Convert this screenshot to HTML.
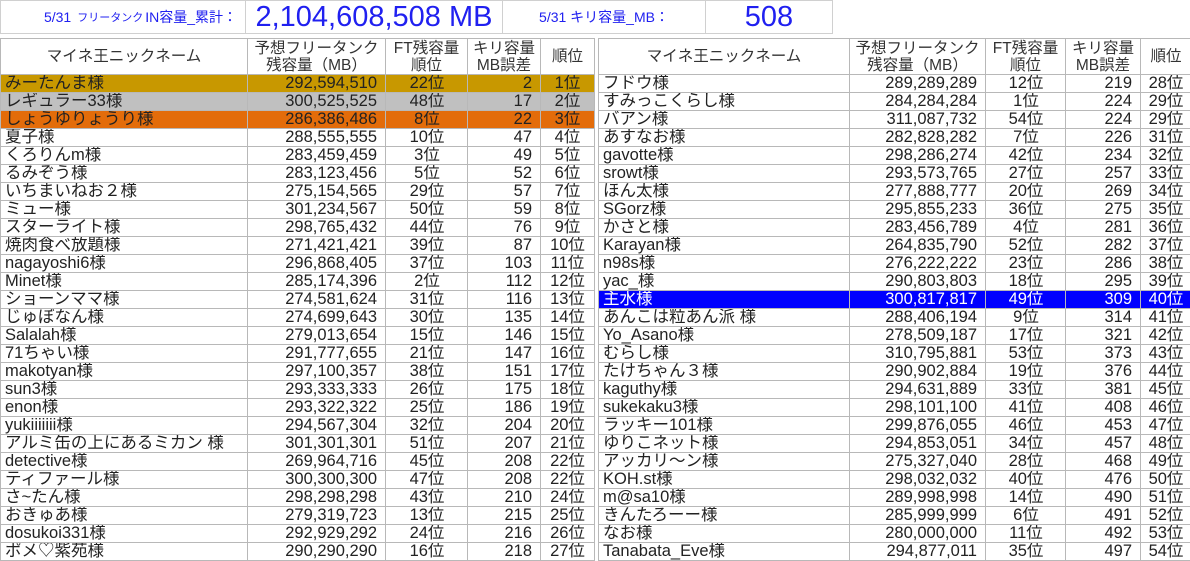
<!DOCTYPE html>
<html><head><meta charset="utf-8"><style>
body{margin:0;width:1190px;height:561px;background:#fff;position:relative;overflow:hidden;font-family:"Liberation Sans","Noto Sans CJK JP",sans-serif;color:#222}
.box{position:absolute;top:0;height:34px;border:1px solid #d0d0d0;box-sizing:border-box;color:#2020f0;display:flex;align-items:center;white-space:nowrap}
table{position:absolute;top:38px;border-collapse:collapse;table-layout:fixed;font-size:16.5px}
td{border:1px solid #b8b8b8;height:17px;line-height:17px;padding:0 3px 0 4px;white-space:nowrap;overflow:hidden}
th{font-weight:normal;border:1px solid #b8b8b8;height:35px;line-height:17px;font-size:15.5px;padding:0;color:#333}
tr td:nth-child(2),tr td:nth-child(4){text-align:right;padding-right:8px}
tr td:nth-child(3){text-align:center}
tr td:nth-child(5){text-align:center;padding:0}
.g{background:#c89800}.s{background:#c0c0c0}.o{background:#e36c0a}.b{background:#0000ff;color:#fff}
</style></head><body>
<div class="box" style="left:0;width:246px;justify-content:flex-end;padding-right:8px;font-size:14px">5/31 <span style="font-size:11px;margin:0 2px 0 6px">フリータンク</span>IN容量_累計：</div>
<div class="box" style="left:245px;width:258px;justify-content:center;font-size:29px">2,104,608,508 MB</div>
<div class="box" style="left:502px;width:204px;justify-content:center;font-size:14px">5/31 キリ容量_MB：</div>
<div class="box" style="left:705px;width:128px;justify-content:center;font-size:29px">508</div>

<table style="left:0;width:594px">
<colgroup><col style="width:247px"><col style="width:138px"><col style="width:82px"><col style="width:73px"><col style="width:54px"></colgroup>
<tr><th>マイネ王ニックネーム</th><th>予想フリータンク<br>残容量（MB）</th><th>FT残容量<br>順位</th><th>キリ容量<br>MB誤差</th><th>順位</th></tr>
<tr class="g"><td>みーたんま様</td><td>292,594,510</td><td>22位</td><td>2</td><td>1位</td></tr>
<tr class="s"><td>レギュラー33様</td><td>300,525,525</td><td>48位</td><td>17</td><td>2位</td></tr>
<tr class="o"><td>しょうゆりょうり様</td><td>286,386,486</td><td>8位</td><td>22</td><td>3位</td></tr>
<tr><td>夏子様</td><td>288,555,555</td><td>10位</td><td>47</td><td>4位</td></tr>
<tr><td>くろりんm様</td><td>283,459,459</td><td>3位</td><td>49</td><td>5位</td></tr>
<tr><td>るみぞう様</td><td>283,123,456</td><td>5位</td><td>52</td><td>6位</td></tr>
<tr><td>いちまいねお２様</td><td>275,154,565</td><td>29位</td><td>57</td><td>7位</td></tr>
<tr><td>ミュー様</td><td>301,234,567</td><td>50位</td><td>59</td><td>8位</td></tr>
<tr><td>スターライト様</td><td>298,765,432</td><td>44位</td><td>76</td><td>9位</td></tr>
<tr><td>焼肉食べ放題様</td><td>271,421,421</td><td>39位</td><td>87</td><td>10位</td></tr>
<tr><td>nagayoshi6様</td><td>296,868,405</td><td>37位</td><td>103</td><td>11位</td></tr>
<tr><td>Minet様</td><td>285,174,396</td><td>2位</td><td>112</td><td>12位</td></tr>
<tr><td>ショーンママ様</td><td>274,581,624</td><td>31位</td><td>116</td><td>13位</td></tr>
<tr><td>じゅぼなん様</td><td>274,699,643</td><td>30位</td><td>135</td><td>14位</td></tr>
<tr><td>Salalah様</td><td>279,013,654</td><td>15位</td><td>146</td><td>15位</td></tr>
<tr><td>71ちゃい様</td><td>291,777,655</td><td>21位</td><td>147</td><td>16位</td></tr>
<tr><td>makotyan様</td><td>297,100,357</td><td>38位</td><td>151</td><td>17位</td></tr>
<tr><td>sun3様</td><td>293,333,333</td><td>26位</td><td>175</td><td>18位</td></tr>
<tr><td>enon様</td><td>293,322,322</td><td>25位</td><td>186</td><td>19位</td></tr>
<tr><td>yukiiiiiii様</td><td>294,567,304</td><td>32位</td><td>204</td><td>20位</td></tr>
<tr><td>アルミ缶の上にあるミカン 様</td><td>301,301,301</td><td>51位</td><td>207</td><td>21位</td></tr>
<tr><td>detective様</td><td>269,964,716</td><td>45位</td><td>208</td><td>22位</td></tr>
<tr><td>ティファール様</td><td>300,300,300</td><td>47位</td><td>208</td><td>22位</td></tr>
<tr><td>さ~たん様</td><td>298,298,298</td><td>43位</td><td>210</td><td>24位</td></tr>
<tr><td>おきゅあ様</td><td>279,319,723</td><td>13位</td><td>215</td><td>25位</td></tr>
<tr><td>dosukoi331様</td><td>292,929,292</td><td>24位</td><td>216</td><td>26位</td></tr>
<tr><td>ポメ♡紫苑様</td><td>290,290,290</td><td>16位</td><td>218</td><td>27位</td></tr>
</table>

<table style="left:598px;width:593px">
<colgroup><col style="width:251px"><col style="width:136px"><col style="width:80px"><col style="width:75px"><col style="width:51px"></colgroup>
<tr><th>マイネ王ニックネーム</th><th>予想フリータンク<br>残容量（MB）</th><th>FT残容量<br>順位</th><th>キリ容量<br>MB誤差</th><th>順位</th></tr>
<tr><td>フドウ様</td><td>289,289,289</td><td>12位</td><td>219</td><td>28位</td></tr>
<tr><td>すみっこくらし様</td><td>284,284,284</td><td>1位</td><td>224</td><td>29位</td></tr>
<tr><td>バアン様</td><td>311,087,732</td><td>54位</td><td>224</td><td>29位</td></tr>
<tr><td>あすなお様</td><td>282,828,282</td><td>7位</td><td>226</td><td>31位</td></tr>
<tr><td>gavotte様</td><td>298,286,274</td><td>42位</td><td>234</td><td>32位</td></tr>
<tr><td>srowt様</td><td>293,573,765</td><td>27位</td><td>257</td><td>33位</td></tr>
<tr><td>ほん太様</td><td>277,888,777</td><td>20位</td><td>269</td><td>34位</td></tr>
<tr><td>SGorz様</td><td>295,855,233</td><td>36位</td><td>275</td><td>35位</td></tr>
<tr><td>かさと様</td><td>283,456,789</td><td>4位</td><td>281</td><td>36位</td></tr>
<tr><td>Karayan様</td><td>264,835,790</td><td>52位</td><td>282</td><td>37位</td></tr>
<tr><td>n98s様</td><td>276,222,222</td><td>23位</td><td>286</td><td>38位</td></tr>
<tr><td>yac_様</td><td>290,803,803</td><td>18位</td><td>295</td><td>39位</td></tr>
<tr class="b"><td>主水様</td><td>300,817,817</td><td>49位</td><td>309</td><td>40位</td></tr>
<tr><td>あんこは粒あん派 様</td><td>288,406,194</td><td>9位</td><td>314</td><td>41位</td></tr>
<tr><td>Yo_Asano様</td><td>278,509,187</td><td>17位</td><td>321</td><td>42位</td></tr>
<tr><td>むらし様</td><td>310,795,881</td><td>53位</td><td>373</td><td>43位</td></tr>
<tr><td>たけちゃん３様</td><td>290,902,884</td><td>19位</td><td>376</td><td>44位</td></tr>
<tr><td>kaguthy様</td><td>294,631,889</td><td>33位</td><td>381</td><td>45位</td></tr>
<tr><td>sukekaku3様</td><td>298,101,100</td><td>41位</td><td>408</td><td>46位</td></tr>
<tr><td>ラッキー101様</td><td>299,876,055</td><td>46位</td><td>453</td><td>47位</td></tr>
<tr><td>ゆりこネット様</td><td>294,853,051</td><td>34位</td><td>457</td><td>48位</td></tr>
<tr><td>アッカリ～ン様</td><td>275,327,040</td><td>28位</td><td>468</td><td>49位</td></tr>
<tr><td>KOH.st様</td><td>298,032,032</td><td>40位</td><td>476</td><td>50位</td></tr>
<tr><td>m@sa10様</td><td>289,998,998</td><td>14位</td><td>490</td><td>51位</td></tr>
<tr><td>きんたろーー様</td><td>285,999,999</td><td>6位</td><td>491</td><td>52位</td></tr>
<tr><td>なお様</td><td>280,000,000</td><td>11位</td><td>492</td><td>53位</td></tr>
<tr><td>Tanabata_Eve様</td><td>294,877,011</td><td>35位</td><td>497</td><td>54位</td></tr>
</table>
</body></html>
